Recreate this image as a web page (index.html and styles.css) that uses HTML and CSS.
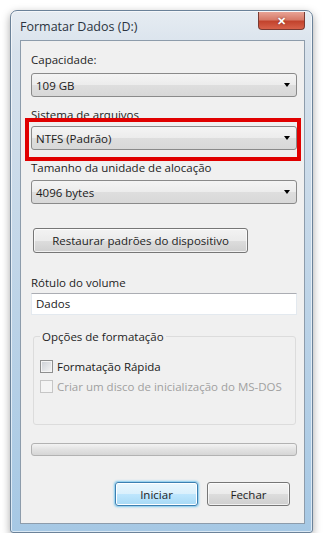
FILE: index.html
```html
<!DOCTYPE html>
<html>
<head>
    <meta charset="utf-8">
    <link rel="stylesheet" href="styles.css">
</head>
<body>
    <div class="win">
        <div class="win-titlebar">
            <span class="win-title">Formatar Dados (D:)</span>
            <div class="win-close">&#x2715;</div>
        </div>
        <div class="win-client">
            <div class="fld-label">Capacidade:</div>
            <div class="combo combo-first"><span>109 GB</span><i class="combo-arrow"></i></div>

            <div class="fld-label fld-gap">Sistema de arquivos</div>
            <div class="combo combo-fs"><span>NTFS (Padrão)</span><i class="combo-arrow"></i></div>

            <div class="fld-label fld-gap">Tamanho da unidade de alocação</div>
            <div class="combo combo-alloc"><span>4096 bytes</span><i class="combo-arrow"></i></div>

            <div class="btn btn-restore">Restaurar padrões do dispositivo</div>

            <div class="fld-label fld-volume">Rótulo do volume</div>
            <div class="txt-input">Dados</div>

            <fieldset class="grp">
                <legend>Opções de formatação</legend>
                <div class="chk-row">
                    <span class="chk"></span>
                    <span>Formatação Rápida</span>
                </div>
                <div class="chk-row chk-disabled">
                    <span class="chk"></span>
                    <span>Criar um disco de inicialização do MS-DOS</span>
                </div>
            </fieldset>

            <div class="progress"></div>

            <div class="btn-row">
                <div class="btn btn-default">Iniciar</div>
                <div class="btn">Fechar</div>
            </div>

            <!-- highlight drawn over the file system field -->
            <div class="highlight"></div>
        </div>
    </div>
</body>
</html>
```

FILE: styles.css
```css
/* Vista style "Formatar" dialog */

body {
    margin: 0;
    background: #ffffff;
    font-family: "Open Sans", "Noto Sans", sans-serif;
    font-size: 11.5px;
    color: #1a1a1a;
}

.win {
    margin: 10px 0 0 10px;
    width: 303px;
    height: 523px;
    box-sizing: border-box;
    border: 1px solid #6b8299;
    border-radius: 7px 7px 3px 3px;
    background: linear-gradient(to bottom, #e6ecf2 0px, #d8e2ec 40px, #bcd3e7 300px, #a6c8e4 100%);
    box-shadow: 0 3px 9px rgba(0, 0, 0, 0.35), inset 0 0 0 1px rgba(255, 255, 255, 0.6);
    padding: 0 7px 8px 9px;
    display: flex;
    flex-direction: column;
}

.win-titlebar {
    height: 29px;
    display: flex;
    justify-content: space-between;
    align-items: flex-start;
}

.win-title {
    font-size: 12.5px;
    color: #2b3440;
    margin-top: 7px;
}

.win-close {
    margin-top: 1px;
    width: 47px;
    height: 18px;
    box-sizing: border-box;
    border: 1px solid #7a3a32;
    border-top: none;
    border-radius: 0 0 4px 4px;
    background: linear-gradient(to bottom, #e8a395 0%, #d77b69 45%, #c2432d 55%, #d7614a 100%);
    color: #ffffff;
    font-size: 11px;
    font-weight: bold;
    text-align: center;
    line-height: 17px;
    text-shadow: 0 0 2px #7a2a20;
}

.win-client {
    position: relative;
    flex: 1;
    background: #f0f0f0;
    border: 1px solid #8d9cab;
    padding: 12px 7px 0 10px;
}

.fld-label {
    height: 14px;
    line-height: 14px;
    color: #1e1e1e;
}

.fld-gap {
    margin-top: 11px;
}

.combo {
    height: 24px;
    box-sizing: border-box;
    border: 1px solid #8a8a8a;
    border-radius: 3px;
    background: linear-gradient(to bottom, #f4f4f4 0%, #ececec 50%, #dedede 51%, #d8d8d8 100%);
    display: flex;
    align-items: center;
    justify-content: space-between;
    padding: 0 6px 0 4px;
}

.combo-first {
    margin-top: 6px;
}

.combo-fs {
    margin-top: 4px;
}

.combo-alloc {
    margin-top: 5px;
}

.combo-arrow {
    width: 0;
    height: 0;
    border-left: 3px solid transparent;
    border-right: 3px solid transparent;
    border-top: 4px solid #000000;
}

.btn {
    height: 25px;
    box-sizing: border-box;
    border: 1px solid #767676;
    border-radius: 3px;
    background: linear-gradient(to bottom, #f3f3f3 0%, #ebebeb 50%, #dddddd 51%, #cfcfcf 100%);
    box-shadow: inset 0 0 0 1px rgba(255, 255, 255, 0.7);
    display: flex;
    align-items: center;
    justify-content: center;
    color: #1e1e1e;
}

.btn-restore {
    margin: 24px 0 0 2px;
    width: 215px;
}

.fld-volume {
    margin-top: 23px;
}

.txt-input {
    margin-top: 3px;
    height: 22px;
    box-sizing: border-box;
    background: #ffffff;
    border: 1px solid #e3e9ef;
    border-top-color: #abadb3;
    padding: 0 4px;
    line-height: 20px;
}

.grp {
    margin: 14px 1px 0 2px;
    height: 96px;
    box-sizing: border-box;
    border: 1px solid #dcdcdc;
    border-radius: 3px;
    padding: 0 0 0 6px;
}

.grp legend {
    padding: 0 2px;
    color: #1e1e1e;
}

.chk-row {
    display: flex;
    align-items: center;
    gap: 4px;
    height: 20px;
}

.chk-row:first-of-type {
    margin-top: 12px;
}

.chk {
    width: 13px;
    height: 13px;
    box-sizing: border-box;
    border: 1px solid #8e8f8f;
    background: linear-gradient(135deg, #cbcfd5 0%, #f6f6f6 100%);
    box-shadow: inset 0 0 0 1px #f4f4f4;
}

.chk-disabled {
    color: #a0a0a0;
}

.chk-disabled .chk {
    border-color: #c6c6c6;
    background: #f4f4f4;
}

.progress {
    margin-top: 18px;
    height: 13px;
    box-sizing: border-box;
    border: 1px solid #b2b2b2;
    border-radius: 3px;
    background: linear-gradient(to bottom, #f3f3f3 0%, #e2e2e2 50%, #d6d6d6 100%);
}

.btn-row {
    margin: 26px 7px 0 0;
    display: flex;
    justify-content: flex-end;
    gap: 9px;
}

.btn-row .btn {
    width: 83px;
    height: 24px;
}

.btn-default {
    border-color: #3c7fb1;
    background: linear-gradient(to bottom, #eaf6fd 0%, #d9f0fc 50%, #bee6fd 51%, #a7d9f5 100%);
    box-shadow: 0 0 2px 1px #7ec8ee, inset 0 0 0 1px #ffffff;
}

.highlight {
    position: absolute;
    left: 4px;
    top: 77px;
    width: 276px;
    height: 43px;
    box-sizing: border-box;
    border: 4px solid #e00000;
}
```
